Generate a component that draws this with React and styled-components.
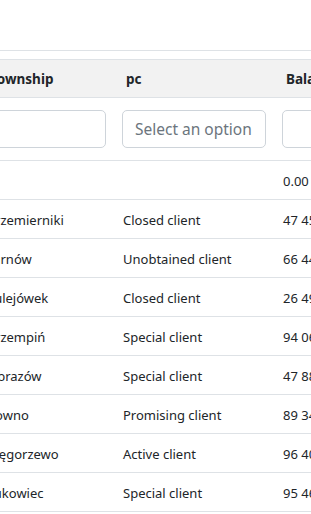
import React from 'react';
import styled, { createGlobalStyle } from 'styled-components';

const Global = createGlobalStyle`
  html, body { margin: 0; padding: 0; background: #fff; }
  body {
    font-family: "Noto Sans", "Open Sans", sans-serif;
    color: #212529;
  }
  * { box-sizing: border-box; }
`;

const COLS = '136px 160px 160px 160px';

const Page = styled.div`
  width: 311px;
  height: 514px;
  overflow: hidden;
  padding-top: 50px;
`;

const Scroller = styled.div`
  overflow: hidden;
  border-top: 1px solid #dee2e6;
  padding-top: 8px;
`;

const Table = styled.div`
  margin-left: -22px;
  width: 616px;
`;

const Row = styled.div`
  display: grid;
  grid-template-columns: ${COLS};
  border-bottom: 1px solid #dee2e6;
  height: ${(p) => p.$h}px;
`;

const HeadRow = styled(Row)`
  background: #f2f2f2;
  border-top: 1px solid #dee2e6;
`;

const HeadCell = styled.div`
  display: flex;
  align-items: center;
  padding: 0 12px;
  font-size: 13.5px;
  font-weight: 700;
  white-space: nowrap;
  color: #212529;
`;

const FilterCell = styled.div`
  padding: 12px 8px 13px 8px;
`;

const Input = styled.div`
  height: 38px;
  border: 1px solid #ced4da;
  border-radius: 5px;
  background: #fff;
  display: flex;
  align-items: center;
  padding: 0 12px;
  font-size: 15.5px;
  color: #6c757d;
  white-space: nowrap;
  overflow: hidden;
`;

const Cell = styled.div`
  display: flex;
  align-items: center;
  padding: 1px 9px 0;
  font-size: 13px;
  white-space: nowrap;
  overflow: hidden;
`;

const rows = [
  ['', '', '0.00'],
  ['Krzemierniki', 'Closed client', '47 453.20'],
  ['Tarnów', 'Unobtained client', '66 441.75'],
  ['Sulejówek', 'Closed client', '26 492.10'],
  ['Krzempiń', 'Special client', '94 063.45'],
  ['Obrazów', 'Special client', '47 882.30'],
  ['Rowno', 'Promising client', '89 341.60'],
  ['Węgorzewo', 'Active client', '96 402.15'],
  ['Łukowiec', 'Special client', '95 464.90'],
];

export default function App() {
  return (
    <Page>
      <Global />
      <Scroller>
        <Table>
          <HeadRow $h={39}>
            <HeadCell>Township</HeadCell>
            <HeadCell>pc</HeadCell>
            <HeadCell>Balance</HeadCell>
            <HeadCell>Status</HeadCell>
          </HeadRow>
          <Row $h={63}>
            <FilterCell><Input /></FilterCell>
            <FilterCell><Input>Select an option</Input></FilterCell>
            <FilterCell><Input /></FilterCell>
            <FilterCell><Input /></FilterCell>
          </Row>
          {rows.map((r, i) => (
            <Row key={i} $h={39}>
              <Cell>{r[0]}</Cell>
              <Cell>{r[1]}</Cell>
              <Cell>{r[2]}</Cell>
              <Cell />
            </Row>
          ))}
        </Table>
      </Scroller>
    </Page>
  );
}
